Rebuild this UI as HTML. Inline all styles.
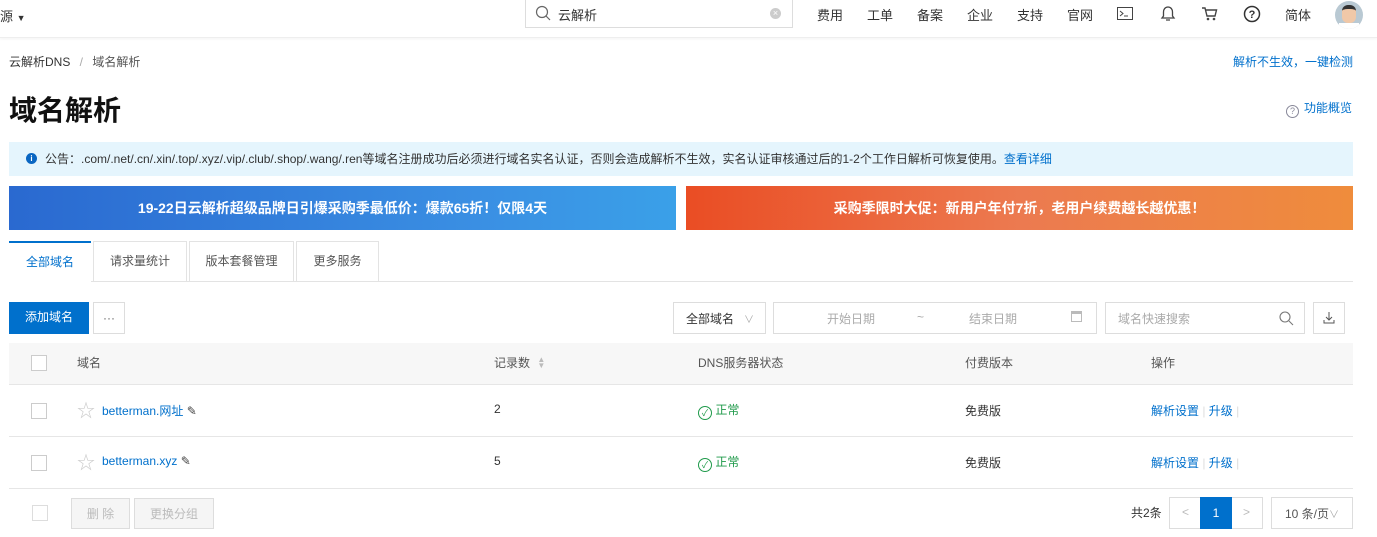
<!DOCTYPE html>
<html><head><meta charset="utf-8"><style>
*{box-sizing:border-box;margin:0;padding:0}
body{width:1377px;height:537px;overflow:hidden;background:#fff;font-family:"Liberation Sans","Noto Sans CJK SC",sans-serif;font-size:12px;color:#333;position:relative}
.a{position:absolute;white-space:nowrap}
.blue{color:#0070cc}
.cb{position:absolute;width:16px;height:16px;border:1px solid #ccc;background:#fff}
.btn{position:absolute;border:1px solid #ddd;background:#fff;display:flex;align-items:center;justify-content:center}
</style></head><body>
<div class="a" style="left:0;top:0;width:1377px;height:38px;border-bottom:1px solid #eee;box-shadow:0 1px 3px rgba(0,0,0,.05)"></div>
<div class="a" style="left:0;top:6px;font-size:13px">源 <span style="font-size:9px">▼</span></div>
<div class="a" style="left:525px;top:-1px;width:268px;height:29px;border:1px solid #ddd;border-top:none"></div>
<svg class="a" style="left:535px;top:5px" width="16" height="16" viewBox="0 0 16 16"><circle cx="7" cy="7" r="5.5" fill="none" stroke="#666" stroke-width="1.2"/><path d="M11 11l4 4" stroke="#666" stroke-width="1.2"/></svg>
<div class="a" style="left:558px;top:5px;font-size:13px">云解析</div>
<div class="a" style="left:770px;top:8px;width:11px;height:11px;border-radius:50%;background:#ccc;color:#fff;font-size:9px;line-height:11px;text-align:center">×</div>
<div class="a" style="left:817px;top:5px;font-size:13px;color:#333">
<span style="position:absolute;left:0">费用</span><span style="position:absolute;left:50px">工单</span><span style="position:absolute;left:100px">备案</span><span style="position:absolute;left:150px">企业</span><span style="position:absolute;left:200px">支持</span><span style="position:absolute;left:250px">官网</span><span style="position:absolute;left:468px">简体</span></div>
<svg class="a" style="left:1117px;top:7px" width="17" height="14"><rect x="0.5" y="0.5" width="15" height="12" fill="none" stroke="#444"/><path d="M3 4l3 2.5L3 9M7 9h4" stroke="#444" fill="none"/></svg>
<svg class="a" style="left:1160px;top:5px" width="16" height="18"><path d="M8 2c-3 0-4.5 2.5-4.5 5v4L2 13h12l-1.5-2V7C12.5 4.5 11 2 8 2zM6 15h4" fill="none" stroke="#444" stroke-width="1.3"/></svg>
<svg class="a" style="left:1201px;top:6px" width="17" height="16"><path d="M1 2h3l2 8h8l1.5-6H5" fill="none" stroke="#444" stroke-width="1.4"/><circle cx="7" cy="13" r="1.3" fill="#444"/><circle cx="13" cy="13" r="1.3" fill="#444"/></svg>
<svg class="a" style="left:1243px;top:5px" width="18" height="18"><circle cx="9" cy="9" r="7.5" fill="none" stroke="#333" stroke-width="1.5"/><text x="9" y="13" text-anchor="middle" font-size="11" font-weight="bold" fill="#333" font-family="Liberation Sans">?</text></svg>
<div class="a" style="left:1335px;top:1px;width:28px;height:28px;border-radius:50%;background:#b9c9d3;overflow:hidden"><div style="position:absolute;left:7px;top:4px;width:14px;height:18px;border-radius:6px;background:#f0c8a8;border-top:4px solid #333"></div><div style="position:absolute;left:4px;top:22px;width:20px;height:8px;background:#fff"></div></div>

<div class="a" style="left:9px;top:53px;color:#333">云解析DNS <span style="color:#aaa;margin:0 6px">/</span> <span style="color:#555">域名解析</span></div>
<div class="a blue" style="left:1233px;top:53px">解析不生效，一键检测</div>
<div class="a" style="left:9px;top:89px;font-size:28px;font-weight:bold;color:#111">域名解析</div>
<div class="a blue" style="left:1286px;top:99px"><span style="display:inline-block;width:13px;height:13px;border:1px solid #889;border-radius:50%;font-size:9px;text-align:center;line-height:11px;color:#889;margin-right:5px;vertical-align:-2px">?</span>功能概览</div>

<div class="a" style="left:9px;top:142px;width:1344px;height:34px;background:#e5f5fd"></div>
<div class="a" style="left:26px;top:153px;width:11px;height:11px;border-radius:50%;background:#0a66c2;color:#fff;font-size:8px;text-align:center;line-height:11px;font-weight:bold">i</div>
<div class="a" style="left:45px;top:150px;color:#333">公告：.com/.net/.cn/.xin/.top/.xyz/.vip/.club/.shop/.wang/.ren等域名注册成功后必须进行域名实名认证，否则会造成解析不生效，实名认证审核通过后的1-2个工作日解析可恢复使用。<span class="blue">查看详细</span></div>

<div class="a" style="left:9px;top:186px;width:667px;height:44px;background:linear-gradient(90deg,#2a69d0,#3a8fe3 70%,#3aa0e8);color:#fff;font-weight:bold;font-size:14px;text-align:center;line-height:44px">19-22日云解析超级品牌日引爆采购季最低价：爆款65折！仅限4天</div>
<div class="a" style="left:686px;top:186px;width:667px;height:44px;background:linear-gradient(90deg,#ea4d24,#ec7a50 50%,#ef8c3c);color:#fff;font-weight:bold;font-size:14px;text-align:center;line-height:44px">采购季限时大促：新用户年付7折，老用户续费越长越优惠！</div>

<div class="a" style="left:9px;top:281px;width:1344px;height:1px;background:#e3e3e3"></div>
<div class="a" style="left:9px;top:241px;width:82px;height:41px;border-top:2px solid #0070cc;background:#fff;text-align:center;line-height:38px;color:#0070cc">全部域名</div>
<div class="a" style="left:93px;top:241px;width:94px;height:40px;border:1px solid #e3e3e3;border-bottom:none;text-align:center;line-height:38px;color:#555">请求量统计</div>
<div class="a" style="left:189px;top:241px;width:105px;height:40px;border:1px solid #e3e3e3;border-bottom:none;text-align:center;line-height:38px;color:#555">版本套餐管理</div>
<div class="a" style="left:296px;top:241px;width:83px;height:40px;border:1px solid #e3e3e3;border-bottom:none;text-align:center;line-height:38px;color:#555">更多服务</div>

<div class="a" style="left:9px;top:302px;width:80px;height:32px;background:#0070cc;color:#fff;text-align:center;line-height:31px">添加域名</div>
<div class="btn" style="left:93px;top:302px;width:32px;height:32px;color:#666">···</div>
<div class="btn" style="left:673px;top:302px;width:93px;height:32px;justify-content:flex-start;padding-left:12px">全部域名 <span style="color:#aaa;margin-left:10px;font-size:10px">∨</span></div>
<div class="btn" style="left:773px;top:302px;width:324px;height:32px;color:#aaa"><span class="a" style="left:53px;top:7px">开始日期</span><span class="a" style="left:143px;top:7px">~</span><span class="a" style="left:195px;top:7px">结束日期</span><span class="a" style="left:297px;top:8px;width:11px;height:11px;border:1px solid #bbb;border-top-width:3px"></span></div>
<div class="btn" style="left:1105px;top:302px;width:200px;height:32px;justify-content:flex-start;padding-left:12px;color:#aaa">域名快速搜索
<svg class="a" style="left:173px;top:8px" width="15" height="15"><circle cx="6" cy="6" r="5" fill="none" stroke="#777" stroke-width="1.1"/><path d="M10 10l4 4" stroke="#777" stroke-width="1.1"/></svg></div>
<div class="btn" style="left:1313px;top:302px;width:32px;height:32px"><svg width="12" height="12"><path d="M6 0v8M3 5l3 3 3-3M1 8v3h10V8" fill="none" stroke="#555"/></svg></div>

<div class="a" style="left:9px;top:343px;width:1344px;height:42px;background:#f7f7f7;border-bottom:1px solid #e6e6e6"></div>
<div class="cb" style="left:31px;top:355px"></div>
<div class="a" style="left:77px;top:354px;color:#555">域名</div>
<div class="a" style="left:494px;top:354px;color:#555">记录数 <span style="color:#bbb;font-size:8px;display:inline-block;line-height:6px;vertical-align:-1px;margin-left:4px">▲<br>▼</span></div>
<div class="a" style="left:698px;top:354px;color:#555">DNS服务器状态</div>
<div class="a" style="left:965px;top:354px;color:#555">付费版本</div>
<div class="a" style="left:1151px;top:354px;color:#555">操作</div>

<div class="a" style="left:9px;top:436px;width:1344px;height:1px;background:#e6e6e6"></div>
<div class="a" style="left:9px;top:488px;width:1344px;height:1px;background:#e6e6e6"></div>

<div class="cb" style="left:31px;top:403px"></div>
<div class="a" style="left:77px;top:397px;color:#ccc;font-size:18px">☆</div>
<div class="a blue" style="left:102px;top:402px">betterman.网址 <span style="color:#444">✎</span></div>
<div class="a" style="left:494px;top:402px">2</div>
<div class="a" style="left:698px;top:401px;color:#1f9a4a"><span style="display:inline-block;width:14px;height:14px;border:1.3px solid #1f9a4a;border-radius:50%;font-size:9px;line-height:12px;text-align:center;vertical-align:-2px">✓</span> 正常</div>
<div class="a" style="left:965px;top:402px">免费版</div>
<div class="a blue" style="left:1151px;top:402px">解析设置 <span style="color:#ddd">|</span> 升级 <span style="color:#ddd">|</span></div>

<div class="cb" style="left:31px;top:455px"></div>
<div class="a" style="left:77px;top:449px;color:#ccc;font-size:18px">☆</div>
<div class="a blue" style="left:102px;top:454px">betterman.xyz <span style="color:#444">✎</span></div>
<div class="a" style="left:494px;top:454px">5</div>
<div class="a" style="left:698px;top:453px;color:#1f9a4a"><span style="display:inline-block;width:14px;height:14px;border:1.3px solid #1f9a4a;border-radius:50%;font-size:9px;line-height:12px;text-align:center;vertical-align:-2px">✓</span> 正常</div>
<div class="a" style="left:965px;top:454px">免费版</div>
<div class="a blue" style="left:1151px;top:454px">解析设置 <span style="color:#ddd">|</span> 升级 <span style="color:#ddd">|</span></div>

<div class="cb" style="left:32px;top:505px;border-color:#ddd"></div>
<div class="btn" style="left:71px;top:498px;width:59px;height:31px;background:#f5f5f5;color:#bbb">删 除</div>
<div class="btn" style="left:134px;top:498px;width:80px;height:31px;background:#f5f5f5;color:#bbb">更换分组</div>
<div class="a" style="left:1131px;top:504px">共2条</div>
<div class="btn" style="left:1169px;top:497px;width:94px;height:32px"></div>
<div class="a" style="left:1182px;top:505px;color:#bbb">&lt;</div>
<div class="a" style="left:1200px;top:497px;width:32px;height:32px;background:#0070cc;color:#fff;text-align:center;line-height:32px">1</div>
<div class="a" style="left:1243px;top:505px;color:#bbb">&gt;</div>
<div class="btn" style="left:1271px;top:497px;width:82px;height:32px;color:#555">10 条/页<span style="color:#aaa;font-size:10px">∨</span></div>
</body></html>
